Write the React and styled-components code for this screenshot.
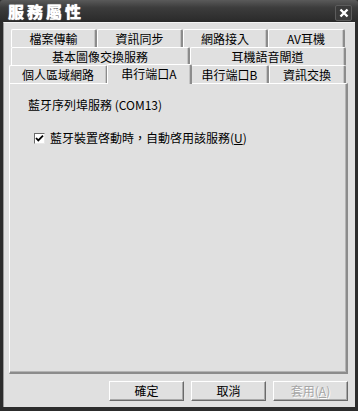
import React from "react"
import styled, { createGlobalStyle } from "styled-components"

const GlobalStyle = createGlobalStyle`
  html, body {
    margin: 0;
    padding: 0;
    background: #ffffff;
  }
  body {
    font-family: "Noto Sans CJK TC", "Liberation Sans", sans-serif;
    font-size: 12px;
    color: #000;
  }
`

const tabRows = [
  { indent: 2, tabs: [["檔案傳輸", 86], ["資訊同步", 86], ["網路接入", 85], ["AV耳機", 77]] },
  { indent: 2, tabs: [["基本圖像交換服務", 179], ["耳機語音閘道", 156]] },
  { indent: 0, tabs: [["個人區域網路", 99], ["串行端口A", 85, true], ["串行端口B", 78], ["資訊交換", 77]] },
]

const App = () => {
  return (
    <>
      <GlobalStyle />
      <Window>
        <TitleBar>
          <Title>服務屬性</Title>
          <CloseButton>
            <svg width="10" height="10" viewBox="0 0 10 10">
              <path d="M1.5 1.5 L8.5 8.5 M8.5 1.5 L1.5 8.5" stroke="#fff" strokeWidth="2.4" />
            </svg>
          </CloseButton>
        </TitleBar>
        <Client>
          <Tabs>
            {tabRows.map((row, i) => (
              <TabRow key={i} $indent={row.indent}>
                {row.tabs.map(([label, width, active]) => (
                  <Tab key={label} $width={width} $active={active}>
                    {label}
                  </Tab>
                ))}
              </TabRow>
            ))}
          </Tabs>
          <Panel>
            <PortName>藍牙序列埠服務 (COM13)</PortName>
            <CheckRow>
              <CheckBox>
                <svg width="9" height="9" viewBox="0 0 9 9">
                  <path d="M1 4 L3.3 6.4 L8 1.6" stroke="#000" strokeWidth="1.8" fill="none" />
                </svg>
              </CheckBox>
              <span>
                藍牙裝置啓動時，自動啓用該服務(<u>U</u>)
              </span>
            </CheckRow>
          </Panel>
          <ButtonBar>
            <Button>確定</Button>
            <Button>取消</Button>
            <Button disabled>
              套用(<u>A</u>)
            </Button>
          </ButtonBar>
        </Client>
      </Window>
    </>
  )
}

const Window = styled.div`
  width: 358px;
  height: 411px;
  box-sizing: border-box;
  display: flex;
  flex-direction: column;
  background: #2c2c2c;
  padding: 0 3px 4px 3px;
`

const TitleBar = styled.div`
  height: 22px;
  margin: 0 -3px;
  padding: 0 6px 0 8px;
  display: flex;
  align-items: center;
  justify-content: space-between;
  background: linear-gradient(180deg, #5a5a5a 0%, #3c3c3c 35%, #2a2a2a 100%);
  border-radius: 3px 3px 0 0;
`

const Title = styled.div`
  color: #ffffff;
  font-weight: 900;
  font-size: 16px;
  letter-spacing: 3px;
  line-height: 22px;
  text-shadow: 0 0 1px #ddd;
`

const CloseButton = styled.div`
  width: 15px;
  height: 14px;
  margin-top: 4px;
  display: flex;
  align-items: center;
  justify-content: center;
  background: #3a3a3a;
  border: 1px solid #5c5c5c;
  border-radius: 2px;
`

const Client = styled.div`
  flex: 1;
  display: flex;
  flex-direction: column;
  background: #e0e0e0;
  border-left: 1px solid #9a9a9a;
  border-top: 1px solid #f4f4f4;
  padding: 6px 6px 0 5px;
`

const Tabs = styled.div`
  display: flex;
  flex-direction: column;
`

const TabRow = styled.div`
  display: flex;
  height: 18px;
  padding-left: ${p => p.$indent}px;
  align-items: flex-end;
`

const Tab = styled.div`
  position: relative;
  box-sizing: border-box;
  width: ${p => p.$width}px;
  height: ${p => (p.$active ? 20 : 18)}px;
  margin: ${p => (p.$active ? "0 -1px -1px -1px" : "0")};
  z-index: ${p => (p.$active ? 2 : 1)};
  display: flex;
  align-items: center;
  justify-content: center;
  padding-bottom: ${p => (p.$active ? 2 : 0)}px;
  background: #e0e0e0;
  border-top: 1px solid #ffffff;
  border-left: 1px solid #ffffff;
  border-right: 2px solid #8c8c8c;
  border-bottom: ${p => (p.$active ? "none" : "0")};
  border-radius: 2px 2px 0 0;
  box-shadow: inset -1px 0 0 #c4c4c4;
  font-size: 12px;
  line-height: 16px;
  white-space: nowrap;
`

const Panel = styled.div`
  flex: 1;
  margin-right: 1px;
  display: flex;
  flex-direction: column;
  padding: 14px 0 0 18px;
  background: #e0e0e0;
  border-top: 1px solid #ffffff;
  border-left: 1px solid #ffffff;
  border-right: 2px solid #8c8c8c;
  border-bottom: 2px solid #8c8c8c;
  box-shadow: inset -1px -1px 0 #b4b4b4;
`

const PortName = styled.div`
  font-size: 12px;
  line-height: 14px;
`

const CheckRow = styled.label`
  display: flex;
  align-items: center;
  gap: 5px;
  margin-top: 19px;
  margin-left: 6px;
  font-size: 12px;
  line-height: 14px;
`

const CheckBox = styled.span`
  box-sizing: border-box;
  width: 11px;
  height: 11px;
  display: flex;
  align-items: center;
  justify-content: center;
  background: #ffffff;
  border-top: 1px solid #6a6a6a;
  border-left: 1px solid #6a6a6a;
  border-right: 1px solid #e8e8e8;
  border-bottom: 1px solid #e8e8e8;
`

const ButtonBar = styled.div`
  display: flex;
  justify-content: flex-end;
  gap: 7px;
  padding: 7px 1px 6px 0;
`

const Button = styled.button`
  box-sizing: border-box;
  width: 75px;
  height: 20px;
  padding: 0;
  background: #e0e0e0;
  border-top: 1px solid #ffffff;
  border-left: 1px solid #ffffff;
  border-right: 1px solid #6a6a6a;
  border-bottom: 1px solid #6a6a6a;
  box-shadow: inset -1px -1px 0 #a8a8a8;
  font-family: "Noto Sans CJK TC", "Liberation Sans", sans-serif;
  font-size: 12px;
  line-height: 16px;
  color: #000;

  &:disabled {
    color: #a6a6a6;
    text-shadow: 1px 1px 0 #ffffff;
  }
`

export default App
